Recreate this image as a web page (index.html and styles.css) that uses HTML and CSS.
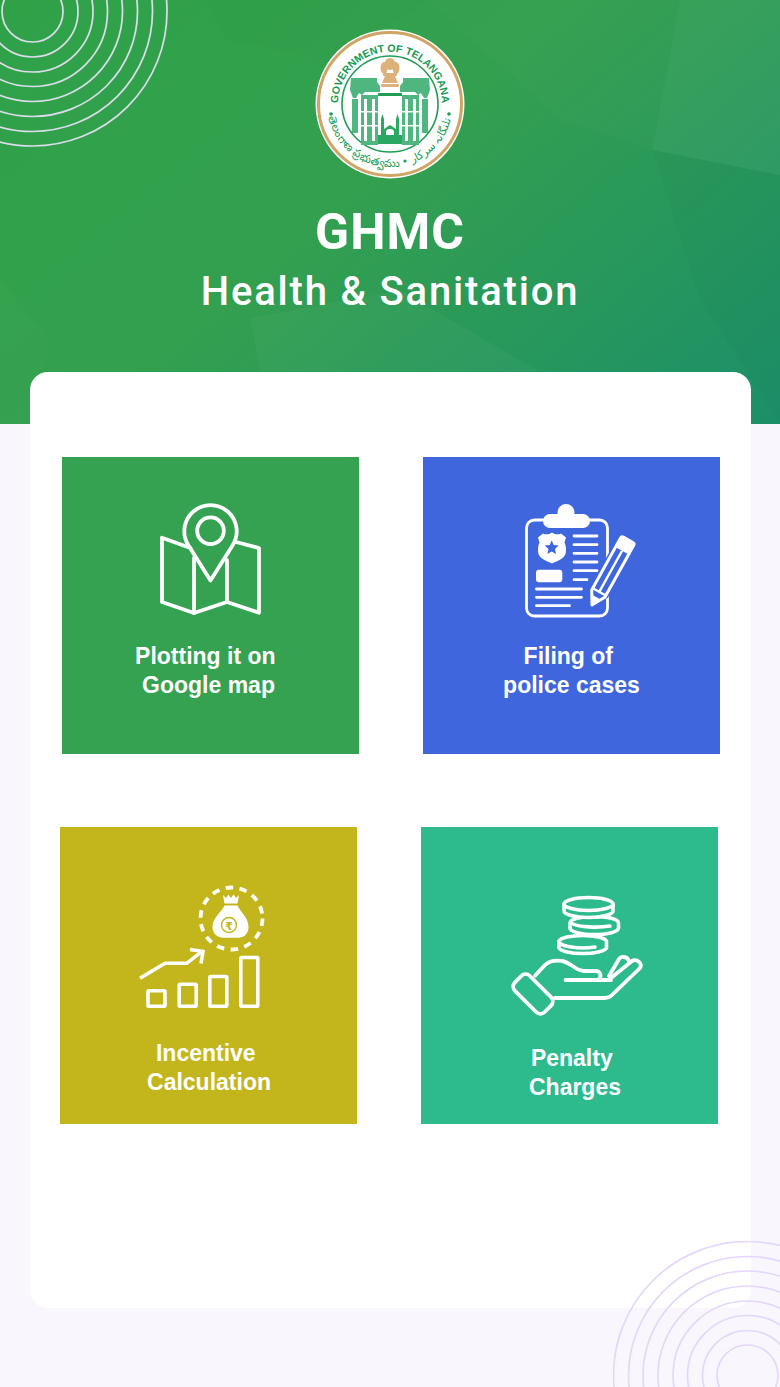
FILE: index.html
```html
<!DOCTYPE html>
<html lang="en">
<head>
    <meta charset="UTF-8">
    <meta name="viewport" content="width=device-width, initial-scale=1.0">
    <title>GHMC Health &amp; Sanitation</title>
    <link rel="stylesheet" href="styles.css">
</head>
<body>
<div id="page">
    <!-- Green header -->
    <header id="hero">
        <svg class="hero-facets" viewBox="0 0 780 424" aria-hidden="true">
            <polygon points="680,0 780,0 780,175 652,150" fill="#fff" opacity=".045"/>
            <polygon points="430,0 680,0 652,150 560,120" fill="#fff" opacity=".015"/>
            <polygon points="250,318 400,290 540,372 262,380" fill="#fff" opacity=".03"/>
            <polygon points="652,150 780,175 780,424 700,300" fill="#000" opacity=".015"/>
            <polygon points="0,280 50,340 30,424 0,424" fill="#fff" opacity=".015"/>
            <polygon points="205,0 430,0 330,60 225,40" fill="#000" opacity=".012"/>
        </svg>
        <svg class="rings" viewBox="0 0 170 150" aria-hidden="true">
            <g fill="none" stroke="#dddcec" stroke-width="1.7">
                <circle cx="32.5" cy="11.5" r="30.5"/>
                <circle cx="32.5" cy="11.5" r="45.5"/>
                <circle cx="32.5" cy="11.5" r="60.5"/>
                <circle cx="32.5" cy="11.5" r="75"/>
                <circle cx="32.5" cy="11.5" r="90"/>
                <circle cx="32.5" cy="11.5" r="105"/>
                <circle cx="32.5" cy="11.5" r="120"/>
                <circle cx="32.5" cy="11.5" r="134.5"/>
            </g>
        </svg>

        <svg class="emblem" viewBox="0 0 150 150" role="img" aria-label="Government of Telangana emblem">
            <defs>
                <path id="arcTop" d="M23.5 82A52 52 0 1 1 126.5 82"/>
                <path id="arcLeft" d="M14 90A63 63 0 0 0 83 137.500"/>
                <path id="arcRight" d="M97 134A63 63 0 0 0 136 90"/>
            </defs>
            <circle cx="75" cy="75" r="74.5" fill="#fff"/>
            <circle cx="75" cy="75" r="71.5" fill="#fff" stroke="#cfa566" stroke-width="3"/>
            <circle cx="75" cy="75" r="48" fill="#fff" stroke="#1f9d55" stroke-width="1.6"/>
            <text class="emblem-text"><textPath href="#arcTop" startOffset="50%" text-anchor="middle">GOVERNMENT OF TELANGANA</textPath></text>
            <circle cx="16" cy="85" r="1.8" fill="#1f9d55"/>
            <circle cx="134" cy="85" r="1.8" fill="#1f9d55"/>
            <circle cx="90" cy="132" r="1.6" fill="#1f9d55"/>
            <text class="emblem-script"><textPath href="#arcLeft" startOffset="50%" text-anchor="middle">తెలంగాణ ప్రభుత్వము</textPath></text>
            <text class="emblem-script"><textPath href="#arcRight" startOffset="50%" text-anchor="middle">تلنگانہ سرکار</textPath></text>

            <!-- lion capital -->
            <g fill="#dcb27a">
                <ellipse cx="75" cy="35" rx="5.5" ry="6"/>
                <ellipse cx="69" cy="39" rx="3.5" ry="6"/>
                <ellipse cx="81" cy="39" rx="3.5" ry="6"/>
                <rect x="68" y="44" width="14" height="3" rx="1"/>
                <path d="M70 47h10l3 7H67z"/>
                <rect x="66" y="55" width="18" height="3" rx="1"/>
            </g>
            <!-- arch -->
            <g fill="#4fb67f">
                <path d="M36 49h26v4l3 4v6H50l-3 3-3-2-3 5h-3l-3-8z"/>
                <path d="M114 49H88v4l-3 4v6h15l3 3 3-2 3 5h3l3-8z"/>
                <rect x="46" y="66" width="17" height="50"/>
                <rect x="87" y="66" width="17" height="50"/>
                <rect x="37" y="70" width="6" height="34"/>
                <rect x="107" y="70" width="6" height="34"/>
                <rect x="63" y="64" width="24" height="3" fill="#1f9d55"/>
            </g>
            <g fill="#fff">
                <rect x="49" y="70" width="3" height="42"/><rect x="57" y="70" width="3" height="42"/>
                <rect x="90" y="70" width="3" height="42"/><rect x="98" y="70" width="3" height="42"/>
                <rect x="46" y="82" width="17" height="1.500"/><rect x="46" y="96" width="17" height="1.500"/>
                <rect x="87" y="82" width="17" height="1.500"/><rect x="87" y="96" width="17" height="1.500"/>
            </g>
            <!-- charminar -->
            <g fill="#2aa763">
                <path d="M66 106V90l1.500-5 1.500 5v16z"/>
                <path d="M81 106V90l1.500-5 1.500 5v16z"/>
                <path d="M69 106v-6l6-4 6 4v6h-2v-3a4 3 0 0 0-8 0v3z"/>
                <rect x="63" y="106" width="24" height="9"/>
            </g>
        </svg>

        <h1 class="hero-title">GHMC</h1>
        <h2 class="hero-subtitle">Health &amp; Sanitation</h2>
    </header>

    <!-- White card with the four options -->
    <main id="card">
        <div class="tile-row tile-row-top">
            <a class="tile tile-map">
                <svg class="icon" width="161" height="140" viewBox="0 0 161 140">
                    <g fill="none" stroke="#fff" stroke-width="3.8" stroke-linejoin="round" stroke-linecap="round">
                        <circle cx="80.5" cy="40.7" r="13.300"/>
                        <path d="M80.500 90.500 58.500 55.500A26.200 26.200 0 1 1 102.500 55.500z"/>
                        <path d="M60.500 58 32 47.700V112l32 11 33-11 32 10.700V58l-23-6"/>
                        <path d="M64 68v55M97 70v42"/>
                    </g>
                </svg>
                <span class="tile-label">Plotting it on&nbsp;<br>Google map</span>
            </a>
            <a class="tile tile-police">
                <svg class="icon" width="159" height="130" viewBox="-18 0 159 130">
                    <g fill="none" stroke="#fff" stroke-width="2.8" stroke-linecap="round">
                        <rect x="16.500" y="25" width="81" height="96" rx="8"/>
                        <path d="M64 41h23M64 49.700h23M64 58.300h23M64 67h23M64 75.700h23M64 84.700h13"/>
                        <path d="M26.500 94h45M26.500 102.300h45M26.500 110.700h33"/>
                    </g>
                    <rect x="33" y="19" width="47" height="14" rx="7" fill="#fff"/>
                    <circle cx="56" cy="17.500" r="8.500" fill="#fff"/>
                    <path d="M42 37.500c3 2 6 2.500 9 1l5 4-1.500 5c1.500 3 1.500 6 1.500 9 0 6-7 9-14 12-7-3-14-6-14-12 0-3 0-6 1.500-9l-1.500-5 5-4c3 1.500 6 1 9-1z" fill="#fff"/>
                    <path d="m41.700 45.500 2 4.500 5 .6-3.700 3.300 1 5-4.300-2.500-4.300 2.500 1-5-3.700-3.300 5-.6z" fill="#3f66dd"/>
                    <rect x="26" y="74.700" width="26.300" height="12.600" rx="3" fill="#fff"/>
                    <g transform="translate(82 110) rotate(29)">
                        <path d="M0 3-10.500-14V-70h21v56z" fill="#3f66dd"/>
                        <path d="M0 0-7.500-13V-64H7.500v51z" fill="none" stroke="#fff" stroke-width="3" stroke-linejoin="round"/>
                        <path d="M0-15V-62" stroke="#fff" stroke-width="2.400"/>
                        <path d="M-7.500-15H7.500" stroke="#fff" stroke-width="2.400"/>
                        <rect x="-9" y="-76" width="18" height="14" rx="3.500" fill="#fff"/>
                        <path d="M0 0-5-9 5-9z" fill="#fff"/>
                    </g>
                </svg>
                <span class="tile-label">Filing of&nbsp;<br>police cases</span>
            </a>
        </div>
        <div class="tile-row tile-row-bottom">
            <a class="tile tile-incentive">
                <svg class="icon" width="157" height="145" viewBox="0 0 157 145">
                    <circle cx="101.500" cy="43.500" r="31" fill="none" stroke="#fff" stroke-width="3.800" stroke-dasharray="7.500 6.500"/>
                    <path d="M93 20l3 3L98.500 19.500l2.500 3.500 2.500-3.500L106 23l3-3-1.500 8.500h-13z" fill="#fff"/>
                    <path d="M94.500 30.500h13c3 7 11 11.500 11 21.500 0 7-5 10.700-10 10.700H93c-5 0-10.500-3.700-10.500-10.700 0-10 9-14.500 12-21.500z" fill="#fff"/>
                    <circle cx="99" cy="50" r="7.500" fill="none" stroke="#c3b61c" stroke-width="1.400"/>
                    <text class="rupee" x="99" y="54.500">₹</text>
                    <g fill="none" stroke="#fff" stroke-width="3.600">
                        <path d="M10 103.300 35 88.300h21.700l15-11.600"/>
                        <path d="M60 74.500l13 2-2 12"/>
                        <rect x="18" y="115.800" width="17" height="15.500" rx="1"/>
                        <rect x="49.200" y="109.200" width="17" height="22.100" rx="1"/>
                        <rect x="79.800" y="101.500" width="17" height="29.800" rx="1"/>
                        <rect x="110.800" y="82.500" width="17" height="48.800" rx="1"/>
                    </g>
                </svg>
                <span class="tile-label">Incentive&nbsp;<br>Calculation</span>
            </a>
            <a class="tile tile-penalty">
                <svg class="icon" width="161" height="140" viewBox="-11 0 161 140">
                    <g fill="#2dbb8e" stroke="#fff" stroke-width="3.600" stroke-linejoin="round" stroke-linecap="round">
                        <path d="M59 56a24 6.500 0 0 1 47.500 0v7a24 6.500 0 0 1-47.500 0z"/>
                        <path d="M59 56.500a24 6.500 0 0 0 36 5.500"/>
                        <path d="M70 38a24 6.500 0 0 1 48.500 0v5a24 6.500 0 0 1-48.500 0z"/>
                        <path d="M73 39a24 5 0 0 0 37 2"/>
                        <path d="M64 19a24.500 6.500 0 0 1 49 0v7a24.500 6.500 0 0 1-49 0z"/>
                        <path d="M64 19a24.500 6.500 0 0 0 49 0"/>
                    </g>
                    <g fill="none" stroke="#fff" stroke-width="3.800" stroke-linejoin="round" stroke-linecap="round">
                        <rect x="-21" y="-10.500" width="42" height="21" rx="6" transform="translate(33 109) rotate(45)"/>
                        <path d="M35 90.700 45 80c5-5 11-5 17-4 8 1 14 10 22 10h12c6 0 6 9 0 9H65.500H111"/>
                        <path d="M55 113H105c3 0 5-1 7-3l28-27c3-4-3-10-8-7l-21 17"/>
                        <path d="M109 91l10-17c2-3 8-3 10 2"/>
                    </g>
                </svg>
                <span class="tile-label">Penalty&nbsp;<br>Charges</span>
            </a>
        </div>
    </main>

    <svg class="rings-bottom" viewBox="0 0 167 146" aria-hidden="true">
        <g fill="none" stroke="#e4d6fd" stroke-width="1.700">
            <circle cx="134.500" cy="134.500" r="30.500"/>
            <circle cx="134.500" cy="134.500" r="45"/>
            <circle cx="134.500" cy="134.500" r="60"/>
            <circle cx="134.500" cy="134.500" r="74.500"/>
            <circle cx="134.500" cy="134.500" r="89.500"/>
            <circle cx="134.500" cy="134.500" r="104.500"/>
            <circle cx="134.500" cy="134.500" r="119"/>
            <circle cx="134.500" cy="134.500" r="134"/>
        </g>
    </svg>
</div>
</body>
</html>
```

FILE: styles.css
```css
body {
    margin: 0;
    font-family: "Liberation Sans", Arial, sans-serif;
    background-color: #f9f6fe;
}
#page {
    position: relative;
    width: 780px;
    height: 1387px;
    overflow: hidden;
}
#hero {
    position: relative;
    height: 424px;
    box-sizing: border-box;
    padding-top: 29px;
    display: flex;
    flex-direction: column;
    align-items: center;
    color: #fff;
    overflow: hidden;
    background: linear-gradient(140deg, #2fa248 0%, #33a04f 45%, #1c8f69 100%);
}
.hero-facets {
    position: absolute;
    top: 0;
    left: 0;
    width: 780px;
    height: 424px;
}
.rings {
    position: absolute;
    top: 0;
    left: 0;
    width: 170px;
    height: 150px;
}
.emblem {
    position: relative;
    width: 150px;
    height: 150px;
    flex: none;
}
.emblem-text {
    font-family: "Liberation Sans", sans-serif;
    font-size: 10.5px;
    font-weight: bold;
    fill: #159a52;
}
.emblem-script {
    font-family: "Noto Sans", "DejaVu Sans", sans-serif;
    font-size: 11px;
    fill: #159a52;
}
.hero-title {
    position: relative;
    margin: 24px 0 0;
    font-family: Roboto, sans-serif;
    font-size: 50px;
    line-height: 58px;
    font-weight: 700;
    letter-spacing: 1px;
}
.hero-subtitle {
    position: relative;
    margin: 7px 0 0;
    font-family: Roboto, sans-serif;
    font-size: 40px;
    line-height: 48px;
    font-weight: 500;
    letter-spacing: 1.8px;
}
#card {
    position: absolute;
    top: 372px;
    left: 30px;
    width: 721px;
    height: 936px;
    background-color: #fff;
    border-radius: 18px;
}
.tile-row {
    display: flex;
    gap: 64px;
}
.tile-row-top {
    padding: 85px 0 0 32px;
}
.tile-row-bottom {
    padding: 73px 0 0 30px;
}
.tile {
    width: 297px;
    height: 297px;
    box-sizing: border-box;
    display: flex;
    flex-direction: column;
    align-items: center;
    color: #fff;
}
.icon {
    display: block;
    flex: none;
}
.tile-label {
    font-size: 23px;
    line-height: 29px;
    font-weight: bold;
    text-align: center;
}
.tile-map {
    background-color: #34a250;
    padding-top: 33px;
}
.tile-map .tile-label {
    margin-top: 12px;
    padding-right: 4px;
}
.tile-police {
    background-color: #3f66dd;
    padding-top: 38px;
}
.tile-police .tile-label {
    margin-top: 17px;
}
.tile-incentive {
    background-color: #c3b61c;
    padding-top: 48px;
}
.tile-incentive .tile-label {
    margin-top: 19px;
    padding-left: 1px;
}
.tile-penalty {
    background-color: #2dbb8e;
    padding-top: 58px;
}
.tile-penalty .tile-label {
    margin-top: 19px;
    padding-left: 11px;
}
.rings-bottom {
    position: absolute;
    right: 0;
    bottom: 0;
    width: 167px;
    height: 146px;
}
.rupee {
    font-family: "DejaVu Sans", sans-serif;
    font-size: 11px;
    font-weight: bold;
    text-anchor: middle;
    fill: #c3b61c;
}
```
